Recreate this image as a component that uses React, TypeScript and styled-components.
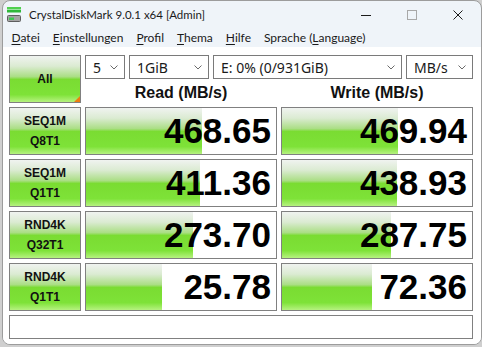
import styled, { createGlobalStyle } from "styled-components";

const GlobalStyle = createGlobalStyle`
  html, body {
    margin: 0;
    padding: 0;
  }
  body {
    width: 482px;
    height: 347px;
    overflow: hidden;
    background: #cfcfcf;
    font-family: "Noto Sans", "Open Sans", sans-serif;
  }
`;

// glass look used by the test buttons and the result bars
const glass =
  "linear-gradient(to bottom, #f0f3f0 0%, #dbebd2 22%, #aade84 45%, #7adc32 51%, #7ee238 84%, #b6f280 100%)";

interface Result {
  name: string;
  sub: string;
  read: string;
  write: string;
  readFill: number;
  writeFill: number;
}

const results: Result[] = [
  { name: "SEQ1M", sub: "Q8T1", read: "468.65", write: "469.94", readFill: 116, writeFill: 116 },
  { name: "SEQ1M", sub: "Q1T1", read: "411.36", write: "438.93", readFill: 114, writeFill: 115 },
  { name: "RND4K", sub: "Q32T1", read: "273.70", write: "287.75", readFill: 107, writeFill: 109 },
  { name: "RND4K", sub: "Q1T1", read: "25.78", write: "72.36", readFill: 76, writeFill: 90 },
];

const menus = [
  ["D", "atei"],
  ["E", "instellungen"],
  ["P", "rofil"],
  ["T", "hema"],
  ["H", "ilfe"],
];

const Chevron = () => (
  <svg width="8" height="5" viewBox="0 0 8 5">
    <polyline points="0.5,0.5 4,4 7.5,0.5" fill="none" stroke="#6a6a6a" strokeWidth="1" />
  </svg>
);

const AppIcon = () => (
  <svg width="16" height="16" viewBox="0 0 16 16">
    <rect x="1" y="0" width="14" height="2.5" fill="#4fd04f" />
    <rect x="1" y="3" width="14" height="2.5" fill="#2fb83a" />
    <rect x="1.5" y="8.5" width="13" height="6" rx="1" fill="#a4a4a4" stroke="#5e5e5e" />
    <rect x="3" y="10.5" width="5" height="2.5" fill="#3cc850" />
  </svg>
);

const App = () => {
  return (
    <>
      <GlobalStyle />
      <Window>
        <TitleBar>
          <IconSlot>
            <AppIcon />
          </IconSlot>
          <Title>CrystalDiskMark 9.0.1 x64 [Admin]</Title>
          <Caption>
            <CaptionButton>
              <svg width="10" height="10" viewBox="0 0 10 10">
                <line x1="0" y1="5.5" x2="10" y2="5.5" stroke="#1b1b1b" strokeWidth="1" />
              </svg>
            </CaptionButton>
            <CaptionButton>
              <svg width="10" height="10" viewBox="0 0 10 10">
                <rect x="0.5" y="0.5" width="9" height="9" fill="none" stroke="#a8a8a8" strokeWidth="1" />
              </svg>
            </CaptionButton>
            <CaptionButton>
              <svg width="10" height="10" viewBox="0 0 10 10">
                <path d="M0.5 0.5 L9.5 9.5 M9.5 0.5 L0.5 9.5" stroke="#1b1b1b" strokeWidth="1" />
              </svg>
            </CaptionButton>
          </Caption>
        </TitleBar>

        <MenuBar>
          {menus.map(([key, rest]) => (
            <MenuItem key={key}>
              <u>{key}</u>
              {rest}
            </MenuItem>
          ))}
          <MenuItem>
            Sprache (<u>L</u>anguage)
          </MenuItem>
        </MenuBar>

        <Body>
          <Board>
            <AllButton>All</AllButton>
            <TopArea>
              <Selects>
                <Select $width={40}>
                  <span>5</span>
                  <Chevron />
                </Select>
                <Select $width={80}>
                  <span>1GiB</span>
                  <Chevron />
                </Select>
                <Select $width={189}>
                  <span>E: 0% (0/931GiB)</span>
                  <Chevron />
                </Select>
                <Select $width={67}>
                  <span>MB/s</span>
                  <Chevron />
                </Select>
              </Selects>
              <Headers>
                <Header>Read (MB/s)</Header>
                <Header>Write (MB/s)</Header>
              </Headers>
            </TopArea>

            {results.map((r, i) => (
              <Row key={i}>
                <TestButton>
                  <span>{r.name}</span>
                  <span>{r.sub}</span>
                </TestButton>
                <Value style={{ backgroundSize: `${r.readFill}px 100%, auto` }}>{r.read}</Value>
                <Value style={{ backgroundSize: `${r.writeFill}px 100%, auto` }}>{r.write}</Value>
              </Row>
            ))}

            <StatusBar />
          </Board>
        </Body>
      </Window>
    </>
  );
};

const Window = styled.div`
  box-sizing: border-box;
  width: 480px;
  height: 345px;
  margin-left: 2px;
  border: 1px solid #9c9c9c;
  border-radius: 8px;
  overflow: hidden;
  background: #eff4f9;
  display: flex;
  flex-direction: column;
`;

const TitleBar = styled.div`
  height: 27px;
  display: flex;
  align-items: center;
  flex-shrink: 0;
`;

const IconSlot = styled.div`
  width: 16px;
  height: 16px;
  margin: 0 7px 0 3px;
  display: flex;
`;

const Title = styled.div`
  flex: 1;
  font-family: Lato, "Noto Sans", sans-serif;
  font-size: 11.5px;
  color: #1a1a1a;
  white-space: nowrap;
`;

const Caption = styled.div`
  display: flex;
  height: 100%;
`;

const CaptionButton = styled.div`
  width: 46px;
  height: 100%;
  display: flex;
  align-items: center;
  justify-content: center;
`;

const MenuBar = styled.div`
  height: 19px;
  display: flex;
  align-items: center;
  padding-left: 2px;
  flex-shrink: 0;
`;

const MenuItem = styled.div`
  padding: 0 6.5px;
  font-family: Lato, "Noto Sans", sans-serif;
  font-size: 12px;
  color: #1a1a1a;
  white-space: nowrap;

  u {
    text-decoration-thickness: 1px;
    text-underline-offset: 2px;
  }
`;

const Body = styled.div`
  flex: 1;
  background: #ffffff;
  padding: 8px 6px 0 6px;
`;

const Board = styled.div`
  display: grid;
  grid-template-columns: 72px 192px 192px;
  grid-template-rows: 48px repeat(4, 48px) 24px;
  gap: 4px;
`;

const AllButton = styled.div`
  position: relative;
  box-sizing: border-box;
  border: 1px solid #808080;
  background: ${glass};
  display: flex;
  align-items: center;
  justify-content: center;
  font-family: "Liberation Sans", Arial, sans-serif;
  font-weight: bold;
  font-size: 12px;
  color: #111;

  &::after {
    content: "";
    position: absolute;
    right: 0;
    bottom: 0;
    border-style: solid;
    border-width: 0 0 6px 6px;
    border-color: transparent transparent #f07c10 transparent;
  }
`;

const TopArea = styled.div`
  grid-column: 2 / 4;
  display: flex;
  flex-direction: column;
`;

const Selects = styled.div`
  display: flex;
  gap: 4px;
  height: 24px;
`;

const Select = styled.div<{ $width: number }>`
  box-sizing: border-box;
  width: ${(p) => p.$width}px;
  height: 24px;
  border: 1px solid #7a7a7a;
  background: #fff;
  display: flex;
  align-items: center;
  justify-content: space-between;
  padding: 0 6px 0 7px;
  font-size: 14px;
  color: #1a1a1a;
  white-space: nowrap;
`;

const Headers = styled.div`
  display: grid;
  grid-template-columns: 192px 192px;
  gap: 4px;
  height: 28px;
`;

const Header = styled.div`
  font-family: "Liberation Sans", Arial, sans-serif;
  font-weight: bold;
  font-size: 16px;
  line-height: 28px;
  text-align: center;
  color: #111;
`;

const Row = styled.div`
  display: contents;
`;

const TestButton = styled.div`
  box-sizing: border-box;
  border: 1px solid #808080;
  background: ${glass};
  display: flex;
  flex-direction: column;
  align-items: center;
  justify-content: center;
  font-family: "Liberation Sans", Arial, sans-serif;
  font-weight: bold;
  font-size: 12px;
  line-height: 20px;
  color: #111;
`;

const Value = styled.div`
  box-sizing: border-box;
  border: 1px solid #808080;
  background-color: #fff;
  background-image: ${glass};
  background-repeat: no-repeat;
  padding-right: 5px;
  font-family: "Liberation Sans", Arial, sans-serif;
  font-weight: bold;
  font-size: 35px;
  line-height: 46px;
  text-align: right;
  color: #000;
`;

const StatusBar = styled.div`
  grid-column: 1 / 4;
  box-sizing: border-box;
  border: 1px solid #808080;
  background: #fff;
`;

export default App;
